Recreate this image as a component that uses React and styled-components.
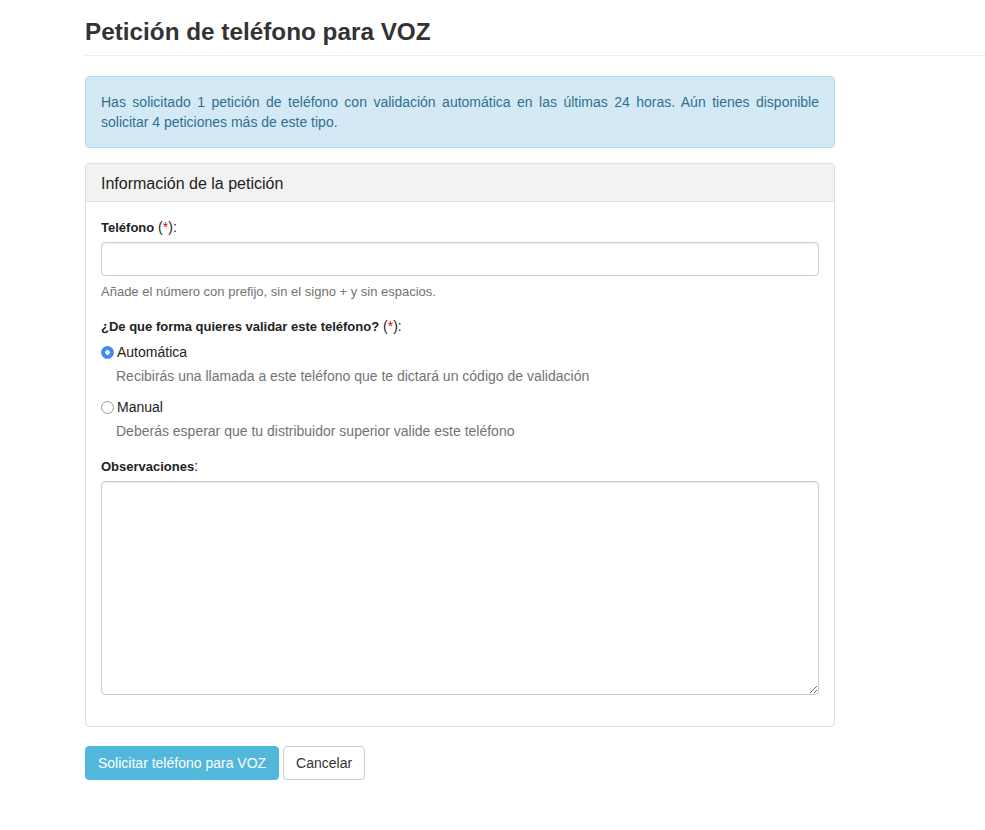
import React, { useState } from 'react';
import styled, { createGlobalStyle } from 'styled-components';

const GlobalStyle = createGlobalStyle`
  body {
    margin: 0;
    background: #fff;
    font-family: "Liberation Sans", Arial, sans-serif;
    font-size: 14px;
    line-height: 20px;
    color: #333;
  }
  * { box-sizing: border-box; }
`;

const OPTIONS = [
  {
    value: 'auto',
    label: 'Automática',
    help: 'Recibirás una llamada a este teléfono que te dictará un código de validación'
  },
  {
    value: 'manual',
    label: 'Manual',
    help: 'Deberás esperar que tu distribuidor superior valide este teléfono'
  }
];

export default function App() {
  const [mode, setMode] = useState('auto');

  return (
    <>
      <GlobalStyle />
      <S.Page>
        <S.Header>
          <S.Title>Petición de teléfono para VOZ</S.Title>
        </S.Header>

        <S.Column>
          <S.Alert>
            Has solicitado 1 petición de teléfono con validación automática en las últimas 24 horas.
            Aún tienes disponible solicitar 4 peticiones más de este tipo.
          </S.Alert>

          <S.Panel>
            <S.PanelHeading>Información de la petición</S.PanelHeading>
            <S.PanelBody>
              <S.Group>
                <S.Label>Teléfono<S.Req> (<em>*</em>):</S.Req></S.Label>
                <S.Input type="text" />
                <S.Help>Añade el número con prefijo, sin el signo + y sin espacios.</S.Help>
              </S.Group>

              <S.Group>
                <S.Label>¿De que forma quieres validar este teléfono?<S.Req> (<em>*</em>):</S.Req></S.Label>
                {OPTIONS.map((opt, i) => (
                  <S.Option key={ opt.value } first={ i === 0 }>
                    <S.RadioRow>
                      <S.Radio
                          type="radio"
                          name="mode"
                          checked={ mode === opt.value }
                          onChange={ () => setMode(opt.value) } />
                      { opt.label }
                    </S.RadioRow>
                    <S.RadioHelp>{ opt.help }</S.RadioHelp>
                  </S.Option>
                ))}
              </S.Group>

              <S.Group>
                <S.Label>Observaciones<S.Req>:</S.Req></S.Label>
                <S.TextArea />
              </S.Group>
            </S.PanelBody>
          </S.Panel>

          <S.Actions>
            <S.Button primary>Solicitar teléfono para VOZ</S.Button>
            <S.Button>Cancelar</S.Button>
          </S.Actions>
        </S.Column>
      </S.Page>
    </>
  );
}

const S = {};
S.Page = styled.div`
  padding: 0 0 40px 85px;
`;
S.Header = styled.div`
  padding: 18px 0 9px;
  border-bottom: 1px solid #eee;
  margin-bottom: 20px;
`;
S.Title = styled.h1`
  margin: 0;
  font-size: 24.3px;
  line-height: 28px;
  font-weight: bold;
  color: #333;
`;
S.Column = styled.div`
  width: 750px;
`;
S.Alert = styled.div`
  padding: 15px;
  margin-bottom: 15px;
  background: #d4e9f6;
  border: 1px solid #b3e0ee;
  border-radius: 4px;
  color: #31708f;
  text-align: justify;
`;
S.Panel = styled.div`
  border: 1px solid #ddd;
  border-radius: 4px;
  margin-bottom: 19px;
`;
S.PanelHeading = styled.div`
  padding: 10px 15px 8px;
  background: #f2f2f2;
  border-bottom: 1px solid #ddd;
  border-radius: 3px 3px 0 0;
  font-size: 16px;
  line-height: 19px;
  color: #222;
`;
S.PanelBody = styled.div`
  padding: 16px 15px 16px;
`;
S.Group = styled.div`
  margin-bottom: 15px;
`;
S.Label = styled.label`
  display: block;
  margin-bottom: 4px;
  font-weight: bold;
  font-size: 13px;
  line-height: 20px;
  color: #222;
`;
S.Req = styled.span`
  font-weight: normal;
  font-size: 14px;
  line-height: 1;
  em { font-style: normal; color: #e00; }
`;
S.Input = styled.input`
  display: block;
  width: 100%;
  height: 34px;
  padding: 6px 12px;
  border: 1px solid #ccc;
  border-radius: 4px;
  font: inherit;
  box-shadow: inset 0 1px 1px rgba(0,0,0,.075);
`;
S.Help = styled.div`
  margin-top: 6px;
  color: #737373;
  font-size: 13px;
`;
S.Option = styled.div`
  margin-top: ${props => props.first ? '5px' : '11px'};
  padding-bottom: ${props => props.first ? '0' : '1px'};
`;
S.RadioRow = styled.label`
  display: flex;
  align-items: center;
  gap: 3px;
  font-size: 14px;
  color: #222;
`;
S.Radio = styled.input`
  appearance: none;
  width: 13px;
  height: 13px;
  margin: 0;
  border: 1px solid #9a9a9a;
  border-radius: 50%;
  background: #fff;

  &:checked {
    border-color: #3b86f0;
    background: radial-gradient(circle, #fff 0 2px, #3b8cf5 2.5px);
  }
`;
S.RadioHelp = styled.div`
  margin: 4px 0 0 15px;
  color: #737373;
  font-size: 14px;
`;
S.TextArea = styled.textarea`
  display: block;
  width: 100%;
  height: 214px;
  padding: 6px 12px;
  border: 1px solid #ccc;
  border-radius: 4px;
  font: inherit;
  box-shadow: inset 0 1px 1px rgba(0,0,0,.075);
`;
S.Actions = styled.div`
  display: flex;
  gap: 4px;
`;
S.Button = styled.button`
  height: 34px;
  padding: 6px 12px;
  border-radius: 4px;
  font-family: inherit;
  font-size: 14px;
  border: 1px solid ${props => props.primary ? '#52b8db' : '#ccc'};
  background: ${props => props.primary ? '#52b8db' : '#fff'};
  color: ${props => props.primary ? '#fff' : '#333'};
`;
